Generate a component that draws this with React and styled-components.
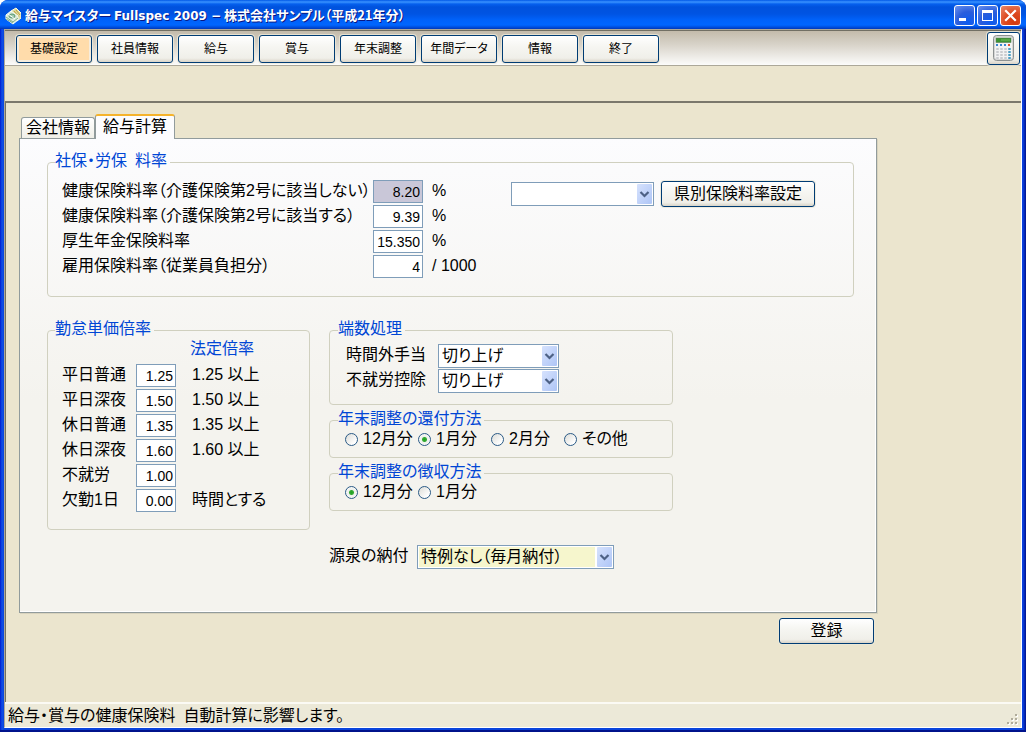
import React from "react";
import styled, { createGlobalStyle, css } from "styled-components";

const GlobalStyle = createGlobalStyle`
  *, *::before, *::after { box-sizing: border-box; }
  body {
    margin: 0;
    background: #fff;
    color: #000;
    font-family: "Liberation Sans", "Noto Sans CJK JP", sans-serif;
    font-size: 16px;
    line-height: 20px;
    font-feature-settings: "palt" 1;
  }
  button, input, select {
    font-family: inherit;
    font-feature-settings: inherit;
    color: inherit;
    margin: 0;
  }
`;

/* ---------- window frame ---------- */

const Window = styled.div`
  display: flex;
  flex-direction: column;
  min-height: 100vh;
  padding: 0 4px 4px;
  border-radius: 8px 8px 0 0;
  background: linear-gradient(90deg, #0019cf 0, #0f4fe6 2px, #0a44dc 4px, #0a44dc calc(100% - 4px), #0b3fe0 calc(100% - 3px), #00138c 100%);
  box-shadow: inset 0 -2px 0 #00138c;
  overflow: hidden;
`;

const TitleBar = styled.header`
  display: flex;
  align-items: center;
  height: 29px;
  flex: none;
  margin: 0 -4px;
  padding: 2px 5px 0 5px;
  background: linear-gradient(
    180deg,
    #0058e6 0,
    #3a93ff 2px,
    #0560ee 4px,
    #0052dd 7px,
    #0054e3 14px,
    #0062fa 20px,
    #0066ff 25px,
    #0050e0 27px,
    #0037b8 29px
  );
`;

const Title = styled.h1`
  flex: 1;
  margin: 0 0 0 4px;
  color: #fff;
  font-family: "Noto Sans CJK JP", sans-serif;
  font-size: 13px;
  line-height: 20px;
  font-weight: 700;
  text-shadow: 1px 1px 0 #0a1883;
  white-space: pre;
`;

const ProductName = styled.span`
  font-family: "DejaVu Sans", sans-serif;
  font-size: 12px;
`;

const CaptionButtons = styled.div`
  display: flex;
  gap: 2px;
`;

const CaptionButton = styled.button`
  display: flex;
  width: 21px;
  height: 21px;
  padding: 0;
  border: 1px solid #fff;
  border-radius: 3px;
  background: ${(p) =>
    p.$close
      ? "radial-gradient(circle at 70% 85%, #d2390e 0, #dd4a20 45%, #ea8a6c 100%)"
      : "radial-gradient(circle at 70% 85%, #0c5cf0 0, #2a5ddc 50%, #6d93ee 100%)"};
`;

const Client = styled.div`
  display: flex;
  flex-direction: column;
  flex: 1;
  background: #ebe5ce;
  border-top: 1px solid #aca899;
  border-left: 1px solid #aca899;
  border-right: 1px solid #fff;
  border-bottom: 1px solid #fff;
`;

/* ---------- toolbar ---------- */

const Toolbar = styled.nav`
  display: flex;
  align-items: center;
  gap: 5px;
  height: 36px;
  flex: none;
  padding: 0 1px 0 11px;
  border-top: 1px solid #716f64;
  border-bottom: 1px solid #aca899;
  background: linear-gradient(180deg, #c3bbab 0, #d8d3c9 40%, #fcfcfb 100%);
`;

const XpButton = styled.button`
  flex: none;
  padding: 0;
  border: 1px solid #003c74;
  border-radius: 3px;
  background: linear-gradient(180deg, #fff 0, #f6f6f2 40%, #f0efe9 85%, #d9d4c8 100%);
  box-shadow: 0 0 0 1px rgba(236, 233, 216, 0.8);
  white-space: nowrap;
`;

const ToolButton = styled(XpButton)`
  width: 76px;
  height: 28px;
  margin-top: 2px;
  font-size: 12px;
  line-height: 20px;
  ${(p) =>
    p.$active &&
    css`
      background: #ffdcab;
      box-shadow: inset 0 0 0 2px #f6ecdc, 0 0 0 1px rgba(236, 233, 216, 0.8);
    `}
`;

const CalculatorButton = styled(XpButton)`
  display: flex;
  align-items: center;
  justify-content: center;
  width: 33px;
  height: 33px;
  margin-left: auto;
`;

const SubBar = styled.div`
  height: 35px;
  flex: none;
`;

/* ---------- main area ---------- */

const Main = styled.main`
  flex: 1;
  padding: 11px 144px 0 13px;
  border-top: 2px solid #7b786c;
  border-left: 1px solid #716f64;
`;

const TabList = styled.div`
  display: flex;
  align-items: flex-end;
  height: 24px;
  padding-left: 2px;
`;

const Tab = styled.button`
  height: ${(p) => (p.$active ? 25 : 21)}px;
  margin-bottom: ${(p) => (p.$active ? -1 : 0)}px;
  padding: 0 ${(p) => (p.$active ? 7 : 4)}px 1px;
  border: 1px solid #919b9c;
  border-bottom: 0;
  border-radius: 3px 3px 0 0;
  background: linear-gradient(180deg, #fff, #f0efe8);
  font-size: 16px;
  line-height: 16px;
  white-space: nowrap;
  ${(p) =>
    p.$active &&
    css`
      position: relative;
      border-top: 2px solid #f5b32b;
      background: #fcfcfe;
    `}
`;

const Panel = styled.form`
  padding: 13px 22px 43px 27px;
  border: 1px solid #919b9c;
  background: linear-gradient(180deg, #fcfcfe 0, #f4f3ee 55%, #f4f3ee 100%);
  box-shadow: inset -1px -1px 0 #fff, 1px 1px 0 #d8d3be;
`;

const Group = styled.fieldset`
  min-width: 0;
  margin: 0;
  padding: ${(p) => p.$pad};
  border: 1px solid #d0d0bf;
  border-radius: 4px;
`;

const Legend = styled.legend`
  margin-left: ${(p) => p.$shift || 0}px;
  padding: 1px 3px 3px 0;
  color: #0046d5;
  font-size: 16px;
  line-height: 16px;
`;

const RateLayout = styled.div`
  display: flex;
  align-items: flex-start;
`;

const Rates = styled.div`
  flex: none;
  width: 449px;
`;

const Row = styled.div`
  display: flex;
  align-items: center;
  height: 25px;
  white-space: nowrap;
`;

const RowLabel = styled.label`
  flex: none;
  width: ${(p) => p.$width}px;
  padding-bottom: 2px;
  white-space: nowrap;
`;

const Field = styled.input`
  width: ${(p) => p.$width}px;
  height: 23px;
  flex: none;
  padding: 0 2px;
  border: 1px solid #7f9db9;
  border-radius: 0;
  background: ${(p) => (p.readOnly ? "#c9c7d8" : "#fff")};
  font-size: 14px;
  text-align: right;
`;

const Note = styled.span`
  margin-left: ${(p) => p.$gap}px;
  padding-bottom: 2px;
  white-space: pre;
`;

const Prefecture = styled.div`
  display: flex;
  align-items: center;
  gap: 7px;
  padding-top: 2px;
`;

const ActionButton = styled(XpButton)`
  width: ${(p) => p.$width}px;
  height: 26px;
  padding-bottom: 1px;
  font-size: 16px;
  line-height: 20px;
`;

const ComboFrame = styled.span`
  position: relative;
  display: block;
  flex: none;
  width: ${(p) => p.$width}px;
  height: 24px;
  border: 1px solid #7f9db9;
  background: #fff;
`;

const ComboSelect = styled.select`
  display: block;
  appearance: none;
  width: 100%;
  height: 22px;
  padding: 0 0 0 2px;
  border: 1px solid #fff;
  border-right-width: 18px;
  border-radius: 0;
  background: ${(p) => (p.$tinted ? "#f6f6cd" : "#fff")};
  font-size: 16px;
  line-height: 20px;
`;

const ComboArrow = styled.svg`
  position: absolute;
  top: 1px;
  right: 1px;
  pointer-events: none;
`;

const Columns = styled.div`
  display: grid;
  grid-template-columns: 263fr 344fr 162fr;
  column-gap: 19px;
  align-items: start;
  margin-top: 23px;
`;

const Stack = styled.div`
  display: flex;
  flex-direction: column;
  gap: 5px;
`;

const LegalHeading = styled.div`
  height: 20px;
  margin: 0 0 3px 128px;
  color: #0046d5;
  line-height: 18px;
`;

const Options = styled.div`
  display: flex;
  height: 18px;
`;

const Option = styled.label`
  display: flex;
  align-items: center;
  gap: 5px;
  width: 73px;
  white-space: nowrap;
`;

const Radio = styled.input`
  appearance: none;
  flex: none;
  width: 13px;
  height: 13px;
  border: 1px solid #2a5a86;
  border-radius: 50%;
  background: linear-gradient(135deg, #dcdcd7, #fff 80%);
  &:checked {
    background: radial-gradient(circle, #21a121 0, #34ab34 2px, #eef0ec 3px, #fff 100%);
  }
`;

const PaymentRow = styled(Row)`
  margin-top: 28px;
`;

const Footer = styled.div`
  display: flex;
  justify-content: flex-end;
  padding: 5px 3px 12px;
`;

const StatusBar = styled.footer`
  display: flex;
  align-items: center;
  justify-content: space-between;
  height: 25px;
  flex: none;
  padding: 0 2px 0 3px;
  border-top: 2px solid #fbfaf4;
  background: #ece9d8;
`;

/* ---------- drawings ---------- */

const MoneyIcon = () => (
  <svg width="16" height="18" viewBox="0 0 16 18" aria-hidden="true">
    <path d="M6 4 11 1 16 6v5l-4 3-6-6z" fill="#d9d9a0" stroke="#fffbe0" />
    <path d="m9 4 5 6M11 3l4 5" stroke="#c5a13a" />
    <path d="M1 8 6 4l7 5v4l-5 4-7-5z" fill="#dcebdc" stroke="#f7fff5" />
    <path d="m1 10 7 5 5-4M1 12l7 4" fill="none" stroke="#7fae8c" />
    <ellipse cx="7" cy="9" rx="3" ry="2" fill="#9fc9ac" stroke="#5c9873" />
    <path d="m3 7 7 5" stroke="#fff" />
  </svg>
);

const MinimizeMark = () => (
  <svg width="19" height="19" aria-hidden="true">
    <path d="M4 12h7v3H4z" fill="#fff" />
  </svg>
);

const MaximizeMark = () => (
  <svg width="19" height="19" aria-hidden="true">
    <path d="M4 4h11v11H4zm1 3v7h9V7z" fill="#fff" fillRule="evenodd" />
  </svg>
);

const CloseMark = () => (
  <svg width="19" height="19" aria-hidden="true">
    <path d="m5 5 9 9m0-9-9 9" stroke="#fff" strokeWidth="2.2" strokeLinecap="square" />
  </svg>
);

const CalculatorIcon = () => (
  <svg width="21" height="26" viewBox="0 0 21 26" aria-hidden="true">
    <rect x="0.5" y="0.5" width="20" height="25" rx="3" fill="#d5d6d5" stroke="#8c9191" />
    <rect x="2" y="2" width="17" height="22" rx="2" fill="#f2f3f3" />
    <rect x="3" y="3" width="15" height="4.5" fill="#3d9431" stroke="#5b7a55" strokeWidth="0.6" />
    <path d="M8 5h9" stroke="#73bd5c" />
    {[3, 7, 11].map((x) => (
      <rect key={x} x={x} y="9" width="2" height="2" fill="#3b87cf" />
    ))}
    <rect x="15" y="9" width="2" height="2" fill="#e2532c" />
    {[13, 16, 19, 22].map((y) =>
      [3, 7, 11].map((x) => (
        <rect key={`${x}-${y}`} x={x} y={y} width="3" height="2" rx="1" fill="#c9cbce" />
      ))
    )}
    {[13, 16, 19, 22].map((y) => (
      <rect key={y} x="15" y={y} width="3" height="2" rx="1" fill="#4a9fc4" />
    ))}
  </svg>
);

const GripDrawing = styled.svg`
  align-self: flex-end;
  margin-bottom: 1px;
`;

const ResizeGrip = () => (
  <GripDrawing width="12" height="12" aria-hidden="true">
    {[
      [8, 0],
      [4, 4],
      [8, 4],
      [0, 8],
      [4, 8],
      [8, 8],
    ].map(([x, y]) => (
      <g key={`${x}-${y}`}>
        <rect x={x + 1} y={y + 1} width="2" height="2" fill="#fff" />
        <rect x={x} y={y} width="2" height="2" fill="#b0ac9b" />
      </g>
    ))}
  </GripDrawing>
);

/* ---------- composed controls ---------- */

function Combo({ id, width, options, tinted, label }) {
  return (
    <ComboFrame $width={width}>
      <ComboSelect id={id} $tinted={tinted} aria-label={label}>
        {options.map((o) => (
          <option key={o}>{o}</option>
        ))}
      </ComboSelect>
      <ComboArrow width="15" height="20" viewBox="0 0 15 20" aria-hidden="true">
        <defs>
          <linearGradient id={`${id}-fill`} x1="0" y1="0" x2="1" y2="1">
            <stop offset="0" stopColor="#d6e2fd" />
            <stop offset="1" stopColor="#aec5f6" />
          </linearGradient>
        </defs>
        <rect width="15" height="20" rx="1" fill={`url(#${id}-fill)`} />
        <path d="m3.5 8 4 4 4-4" fill="none" stroke="#4d6185" strokeWidth="2.2" />
      </ComboArrow>
    </ComboFrame>
  );
}

function RadioGroup({ title, name, options, selected }) {
  return (
    <Group $pad="0 15px 9px">
      <Legend $shift={-7}>{title}</Legend>
      <Options>
        {options.map((o) => (
          <Option key={o}>
            <Radio type="radio" name={name} defaultChecked={o === selected} />
            <span>{o}</span>
          </Option>
        ))}
      </Options>
    </Group>
  );
}

const MENU = ["基礎設定", "社員情報", "給与", "賞与", "年末調整", "年間データ", "情報", "終了"];

const RATES = [
  { id: "health-a", label: "健康保険料率（介護保険第2号に該当しない）", value: "8.20", unit: "%", readOnly: true },
  { id: "health-b", label: "健康保険料率（介護保険第2号に該当する）", value: "9.39", unit: "%" },
  { id: "pension", label: "厚生年金保険料率", value: "15.350", unit: "%" },
  { id: "employment", label: "雇用保険料率（従業員負担分）", value: "4", unit: "/ 1000" },
];

const MULTIPLIERS = [
  { id: "weekday", label: "平日普通", value: "1.25", note: "1.25 以上" },
  { id: "weekday-night", label: "平日深夜", value: "1.50", note: "1.50 以上" },
  { id: "holiday", label: "休日普通", value: "1.35", note: "1.35 以上" },
  { id: "holiday-night", label: "休日深夜", value: "1.60", note: "1.60 以上" },
  { id: "unworked", label: "不就労", value: "1.00", note: "" },
  { id: "absence", label: "欠勤1日", value: "0.00", note: "時間とする" },
];

export default function App() {
  return (
    <>
      <GlobalStyle />
      <Window>
        <TitleBar>
          <MoneyIcon />
          <Title>
            給与マイスター <ProductName>Fullspec 2009 −</ProductName> 株式会社サンプル（平成21年分）
          </Title>
          <CaptionButtons>
            <CaptionButton type="button" aria-label="最小化">
              <MinimizeMark />
            </CaptionButton>
            <CaptionButton type="button" aria-label="最大化">
              <MaximizeMark />
            </CaptionButton>
            <CaptionButton type="button" aria-label="閉じる" $close>
              <CloseMark />
            </CaptionButton>
          </CaptionButtons>
        </TitleBar>

        <Client>
          <Toolbar>
            {MENU.map((m, i) => (
              <ToolButton key={m} type="button" $active={i === 0}>
                {m}
              </ToolButton>
            ))}
            <CalculatorButton type="button" aria-label="電卓">
              <CalculatorIcon />
            </CalculatorButton>
          </Toolbar>
          <SubBar />

          <Main>
            <TabList role="tablist">
              <Tab type="button" role="tab" aria-selected="false">
                会社情報
              </Tab>
              <Tab type="button" role="tab" aria-selected="true" $active>
                給与計算
              </Tab>
            </TabList>

            <Panel id="payroll" onSubmit={(e) => e.preventDefault()}>
              <Group $pad="7px 14px 17px">
                <Legend $shift={-7}>社保・労保{"\u2002"}料率</Legend>
                <RateLayout>
                  <Rates>
                    {RATES.map((r) => (
                      <Row key={r.id}>
                        <RowLabel htmlFor={r.id} $width={311}>
                          {r.label}
                        </RowLabel>
                        <Field id={r.id} $width={50} defaultValue={r.value} readOnly={r.readOnly} />
                        <Note $gap={9}>{r.unit}</Note>
                      </Row>
                    ))}
                  </Rates>
                  <Prefecture>
                    <Combo id="prefecture" width={143} options={[""]} label="都道府県" />
                    <ActionButton type="button" $width={154}>
                      県別保険料率設定
                    </ActionButton>
                  </Prefecture>
                </RateLayout>
              </Group>

              <Columns>
                <Group $pad="0 14px 16px">
                  <Legend $shift={-7}>勤怠単価倍率</Legend>
                  <LegalHeading>法定倍率</LegalHeading>
                  {MULTIPLIERS.map((m) => (
                    <Row key={m.id}>
                      <RowLabel htmlFor={m.id} $width={74}>
                        {m.label}
                      </RowLabel>
                      <Field id={m.id} $width={40} defaultValue={m.value} />
                      <Note $gap={16}>{m.note}</Note>
                    </Row>
                  ))}
                </Group>

                <Stack>
                  <Group $pad="3px 16px 11px">
                    <Legend $shift={-8}>端数処理</Legend>
                    <Row>
                      <RowLabel htmlFor="overtime" $width={92}>
                        時間外手当
                      </RowLabel>
                      <Combo id="overtime" width={121} options={["切り上げ"]} />
                    </Row>
                    <Row>
                      <RowLabel htmlFor="deduction" $width={92}>
                        不就労控除
                      </RowLabel>
                      <Combo id="deduction" width={121} options={["切り上げ"]} />
                    </Row>
                  </Group>
                  <RadioGroup
                    title="年末調整の還付方法"
                    name="refund"
                    options={["12月分", "1月分", "2月分", "その他"]}
                    selected="1月分"
                  />
                  <RadioGroup
                    title="年末調整の徴収方法"
                    name="collection"
                    options={["12月分", "1月分"]}
                    selected="12月分"
                  />
                  <PaymentRow>
                    <RowLabel htmlFor="payment" $width={88}>
                      源泉の納付
                    </RowLabel>
                    <Combo id="payment" width={197} options={["特例なし（毎月納付）"]} tinted />
                  </PaymentRow>
                </Stack>
              </Columns>
            </Panel>

            <Footer>
              <ActionButton type="submit" form="payroll" $width={95}>
                登録
              </ActionButton>
            </Footer>
          </Main>

          <StatusBar>
            <span>給与・賞与の健康保険料{"\u2002"}自動計算に影響します。</span>
            <ResizeGrip />
          </StatusBar>
        </Client>
      </Window>
    </>
  );
}
